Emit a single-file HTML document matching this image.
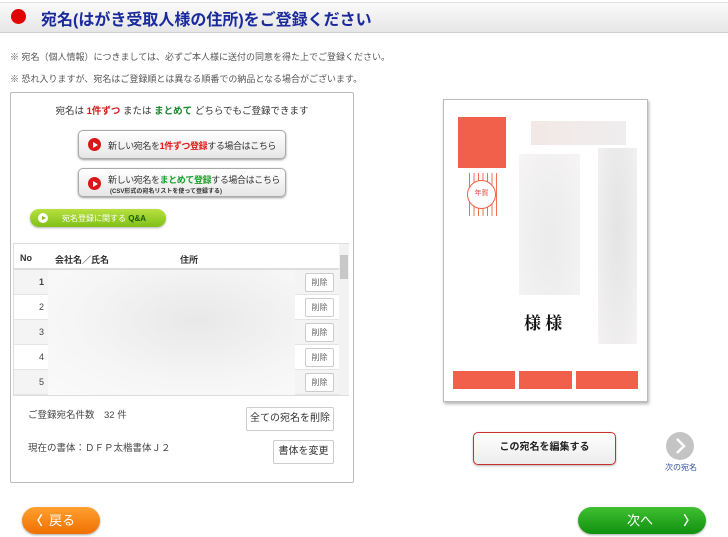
<!DOCTYPE html>
<html><head><meta charset="utf-8"><style>
*{box-sizing:border-box;margin:0;padding:0}
body{width:728px;height:537px;background:#fff;font-family:"Liberation Sans","Noto Sans CJK JP",sans-serif;position:relative;overflow:hidden;color:#333}
.a{position:absolute}
.hdr{left:0;top:2px;width:728px;height:31px;background:linear-gradient(#fafafa,#e6e6e6);border-bottom:1px solid #d0d0d0;border-top:1px solid #e0e0e0}
.dot{left:11px;top:9px;width:15px;height:15px;border-radius:50%;background:#e00000}
.title{left:41px;top:6px;font-size:16px;font-weight:bold;color:#1a2a9c;white-space:nowrap}
.note{left:10px;font-size:9px;color:#555;white-space:nowrap}
.box{left:10px;top:92px;width:344px;height:391px;border:1px solid #bbb;border-radius:2px}
.btn{background:linear-gradient(#fff,#e6e6e6);border:1px solid #aaa;border-radius:5px;box-shadow:0 1px 2px rgba(0,0,0,.4)}
.play{width:13px;height:13px;border-radius:50%;background:#d81818}
.play:after{content:"";position:absolute;left:5px;top:3.5px;border-left:5px solid #fff;border-top:3px solid transparent;border-bottom:3px solid transparent}
.sm{font-size:9px;letter-spacing:-0.4px;white-space:nowrap;color:#333}
.del{left:305px;width:29px;height:19px;border:1px solid #ccc;background:#fff;font-size:8px;color:#666;text-align:center;line-height:17px;border-radius:2px}
.row{left:14px;width:325px;height:25px;border-bottom:1px solid #e4e4e4}
.num{left:14px;width:30px;text-align:right;font-size:9px;color:#444}
.wb{border:1px solid #ccc;background:#fff;font-size:10px;text-align:center;border-radius:2px;color:#333}
.red{background:#f0604a}
</style></head><body>
<div class="a hdr"></div>
<div class="a dot"></div>
<div class="a title">宛名(はがき受取人様の住所)をご登録ください</div>
<div class="a note" style="top:50px">※ 宛名（個人情報）につきましては、必ずご本人様に送付の同意を得た上でご登録ください。</div>
<div class="a note" style="top:72px">※ 恐れ入りますが、宛名はご登録順とは異なる順番での納品となる場合がございます。</div>

<div class="a box"></div>
<div class="a" style="left:10px;width:344px;top:103px;text-align:center;font-size:9.5px;color:#333">宛名は <b style="color:#d01818">1件ずつ</b> または <b style="color:#18882a">まとめて</b> どちらでもご登録できます</div>
<div class="a btn" style="left:78px;top:130px;width:208px;height:29px"></div>
<div class="a play" style="left:88px;top:138px"></div>
<div class="a sm" style="left:108px;top:139px">新しい宛名を<b style="color:#e01818">1件ずつ登録</b>する場合はこちら</div>
<div class="a btn" style="left:78px;top:168px;width:208px;height:29px"></div>
<div class="a play" style="left:88px;top:177px"></div>
<div class="a sm" style="left:108px;top:173px">新しい宛名を<b style="color:#18a02a">まとめて登録</b>する場合はこちら</div>
<div class="a" style="left:110px;top:186px;font-size:6px;font-weight:bold;color:#333;white-space:nowrap">(CSV形式の宛名リストを使って登録する)</div>
<div class="a" style="left:30px;top:209px;width:136px;height:18px;border-radius:9px;background:linear-gradient(#b8e040,#80c018);box-shadow:0 1px 2px rgba(0,0,0,.3)"></div>
<div class="a" style="left:38px;top:213px;width:10px;height:10px;border-radius:50%;background:#fff"></div>
<div class="a" style="left:42px;top:215.5px;border-left:4px solid #80c018;border-top:2.5px solid transparent;border-bottom:2.5px solid transparent"></div>
<div class="a" style="left:62px;top:213px;font-size:8px;color:#fff;white-space:nowrap">宛名登録に関する <b style="color:#1a5a10">Q&amp;A</b></div>

<div class="a" style="left:13px;top:243px;width:336px;height:153px;border:1px solid #ddd"></div>
<div class="a" style="left:14px;top:244px;width:325px;height:26px;border-bottom:2px solid #ddd"></div>
<div class="a" style="left:20px;top:253px;font-size:9px;font-weight:bold;color:#333">No</div>
<div class="a" style="left:55px;top:253px;font-size:9px;font-weight:bold;color:#333">会社名／氏名</div>
<div class="a" style="left:180px;top:253px;font-size:9px;font-weight:bold;color:#333">住所</div>
<div class="a row" style="top:270px;background:#f4f4f4"></div>
<div class="a row" style="top:295px"></div>
<div class="a row" style="top:320px;background:#f4f4f4"></div>
<div class="a row" style="top:345px"></div>
<div class="a row" style="top:370px;background:#f4f4f4"></div>
<div class="a" style="left:48px;top:271px;width:247px;height:124px;background:radial-gradient(ellipse at 60% 40%,#e8e8e8,#f6f6f6 60%,#fafafa)"></div>
<div class="a num" style="top:277px;font-weight:bold">1</div>
<div class="a num" style="top:302px">2</div>
<div class="a num" style="top:327px">3</div>
<div class="a num" style="top:352px">4</div>
<div class="a num" style="top:377px">5</div>
<div class="a del" style="top:273px">削除</div>
<div class="a del" style="top:298px">削除</div>
<div class="a del" style="top:323px">削除</div>
<div class="a del" style="top:348px">削除</div>
<div class="a del" style="top:373px">削除</div>
<div class="a" style="left:339px;top:244px;width:10px;height:151px;background:#f2f2f2"></div>
<div class="a" style="left:340px;top:255px;width:8px;height:24px;background:#c8c8c8"></div>

<div class="a" style="left:28px;top:407px;font-size:9.5px;color:#444">ご登録宛名件数　32 件</div>
<div class="a wb" style="left:246px;top:407px;width:88px;height:24px;line-height:22px">全ての宛名を削除</div>
<div class="a" style="left:28px;top:440px;font-size:9.5px;color:#444">現在の書体：ＤＦＰ太楷書体Ｊ２</div>
<div class="a wb" style="left:273px;top:440px;width:61px;height:24px;line-height:22px">書体を変更</div>

<div class="a" style="left:443px;top:99px;width:205px;height:303px;border:1px solid #bbb;box-shadow:1px 2px 3px rgba(0,0,0,.3);background:#fff"></div>
<div class="a red" style="left:458px;top:117px;width:48px;height:51px"></div>
<div class="a" style="left:469px;top:173px;width:28px;height:43px;background:repeating-linear-gradient(90deg,#f07050 0 1px,transparent 1px 4.5px)"></div>
<div class="a" style="left:467px;top:180px;width:29px;height:29px;border-radius:50%;border:1.5px solid #f06048;background:#fff;font-size:7px;color:#e05040;text-align:center;line-height:26px">年賀</div>
<div class="a" style="left:531px;top:121px;width:95px;height:24px;background:linear-gradient(90deg,#f3e8e6,#eee)"></div>
<div class="a" style="left:519px;top:154px;width:61px;height:141px;background:radial-gradient(ellipse at 50% 60%,#ebebeb,#f6f4f4)"></div>
<div class="a" style="left:598px;top:148px;width:39px;height:196px;background:radial-gradient(ellipse at 50% 40%,#e4e4e4,#f4f2f2)"></div>
<div class="a" style="left:524px;top:309px;font-size:17px;font-weight:bold;color:#111;font-family:'Noto Serif CJK SC',serif;white-space:nowrap">様 様</div>
<div class="a red" style="left:453px;top:371px;width:62px;height:18px"></div>
<div class="a red" style="left:519px;top:371px;width:53px;height:18px"></div>
<div class="a red" style="left:576px;top:371px;width:62px;height:18px"></div>

<div class="a" style="left:473px;top:432px;width:143px;height:33px;border:1.5px solid #c83030;border-radius:5px;background:linear-gradient(#fff,#ececec);box-shadow:0 1px 2px rgba(0,0,0,.3);font-size:10px;font-weight:bold;text-align:center;line-height:30px;color:#222">この宛名を編集する</div>
<div class="a" style="left:666px;top:432px;width:28px;height:28px;border-radius:50%;background:#c4c4c4"></div>
<svg class="a" style="left:666px;top:432px" width="28" height="28"><path d="M11 7 L18 14 L11 21" stroke="#fff" stroke-width="2.5" fill="none"/></svg>
<div class="a" style="left:665px;top:462px;font-size:8px;color:#3050a0">次の宛名</div>

<div class="a" style="left:22px;top:507px;width:78px;height:27px;border-radius:14px;background:linear-gradient(#ffa030,#f07000);box-shadow:0 1px 2px rgba(0,0,0,.35);color:#fff;font-size:13px;line-height:27px;white-space:nowrap"><span style="margin-left:8px;font-weight:bold">〈</span><span style="margin-left:6px">戻る</span></div>
<div class="a" style="left:578px;top:507px;width:128px;height:27px;border-radius:14px;background:linear-gradient(#40c030,#109010);box-shadow:0 1px 2px rgba(0,0,0,.35);color:#fff;font-size:13px;line-height:27px"><span style="position:absolute;left:49px">次へ</span><span style="position:absolute;right:10px;font-weight:bold">〉</span></div>
</body></html>
